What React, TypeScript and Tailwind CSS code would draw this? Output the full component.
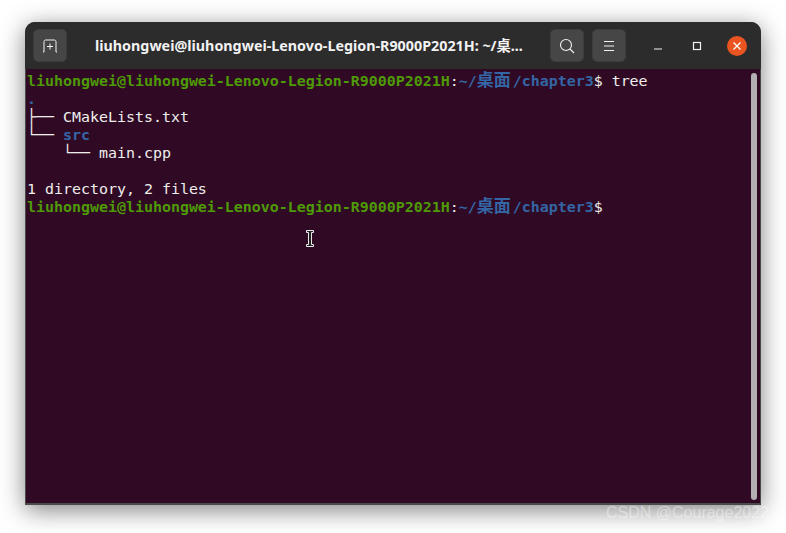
const promptFont = { fontFamily: '"DejaVu Sans Mono", "Noto Sans CJK SC", monospace' };

function Prompt({ children }: { children?: React.ReactNode }) {
  return (
    <div className="flex h-[18px] items-center whitespace-pre">
      <span className="font-bold text-[#4e9a06]">liuhongwei@liuhongwei-Lenovo-Legion-R9000P2021H</span>
      <span className="text-[#eeeeec]">:</span>
      <span className="font-bold text-[#3465a4]">
        ~/
        <span className="inline-block w-[36px] font-['Noto_Sans_CJK_SC',sans-serif] text-[17px] leading-[0]">桌面</span>
        /chapter3
      </span>
      <span className="text-[#eeeeec]">$</span>
      {children}
    </div>
  );
}

function HeaderButton({ children }: { children: React.ReactNode }) {
  return (
    <button className="flex h-[33px] w-[34px] items-center justify-center rounded-[5px] border border-[#3c3c3c] bg-[#464646]">
      {children}
    </button>
  );
}

export default function App() {
  return (
    <div className="relative h-[533px] w-[786px] overflow-hidden bg-white pl-[25px] pt-[22px]">
      <div className="flex h-[483px] w-[736px] flex-col overflow-hidden rounded-t-[10px] border-b-2 border-[#4a4a4a] bg-[#2c2c2c] shadow-[0_5px_24px_rgba(0,0,0,0.5)]">
        <header className="flex h-[47px] shrink-0 items-center bg-[#2c2c2c] pl-[8px] pr-[14px]">
          <HeaderButton>
            <svg width="16" height="14" viewBox="0 0 16 14" fill="none" stroke="#f2f2f2" strokeWidth="1">
              <path d="M1 13H2V2.5C2 1.7 2.7 1 3.5 1H12.5C13.3 1 14 1.7 14 2.5V13H15" />
              <path d="M8 4.5V10.5M5 7.5H11" />
            </svg>
          </HeaderButton>
          <h1 className="ml-[28px] w-[427px] whitespace-nowrap text-center font-['Noto_Sans','Noto_Sans_CJK_SC',sans-serif] text-[14.3px] font-bold text-[#f2f2f2]">
            liuhongwei@liuhongwei-Lenovo-Legion-R9000P2021H: ~/桌...
          </h1>
          <div className="ml-[28px] flex gap-[8px]">
            <HeaderButton>
              <svg width="16" height="16" viewBox="0 0 16 16" fill="none" stroke="#f2f2f2" strokeWidth="1.1">
                <circle cx="7" cy="7" r="5.5" />
                <path d="M11 11L15 15" />
              </svg>
            </HeaderButton>
            <HeaderButton>
              <svg width="12" height="10" viewBox="0 0 12 10" fill="none" stroke="#f2f2f2" strokeWidth="1">
                <path d="M1 .5H11M1 5H11M1 9.5H11" />
              </svg>
            </HeaderButton>
          </div>
          <div className="ml-auto flex items-center">
            <svg width="10" height="10" viewBox="0 0 10 10" fill="none" stroke="#f2f2f2" strokeWidth="1.2">
              <path d="M1 8H9" />
            </svg>
            <svg className="ml-[29px]" width="10" height="10" viewBox="0 0 10 10" fill="none" stroke="#f2f2f2" strokeWidth="1.2">
              <rect x="1.5" y="1.5" width="7" height="7" />
            </svg>
            <span className="ml-[25px] flex h-[20px] w-[20px] items-center justify-center rounded-full bg-[#e95420]">
              <svg width="10" height="10" viewBox="0 0 10 10" fill="none" stroke="#ffffff" strokeWidth="1.3">
                <path d="M1.5 1.5L8.5 8.5M8.5 1.5L1.5 8.5" />
              </svg>
            </span>
          </div>
        </header>

        <main
          style={promptFont}
          className="relative flex-1 border-x border-[#4a4a4a] bg-[#300a24] pl-[1px] pt-[3px] text-[14.95px] leading-[18px] text-[#eeeeec]"
        >
          <Prompt>
            <span> tree</span>
          </Prompt>
          <div className="h-[18px] font-bold text-[#3465a4]">.</div>
          <div className="h-[18px] whitespace-pre">├── CMakeLists.txt</div>
          <div className="h-[18px] whitespace-pre">
            └── <span className="font-bold text-[#3465a4]">src</span>
          </div>
          <div className="h-[18px] whitespace-pre">    └── main.cpp</div>
          <div className="h-[18px]" />
          <div className="h-[18px] whitespace-pre">1 directory, 2 files</div>
          <Prompt />

          {/* overlay scrollbar */}
          <div className="absolute bottom-[3px] right-[3px] top-[4px] w-[6px] rounded-full bg-[#b3aeb1]" />
          {/* i-beam pointer */}
          <svg className="absolute left-[280px] top-[161px]" width="8" height="17" viewBox="0 0 8 17" fill="#222" stroke="#fff" strokeWidth="0.9">
            <path d="M.5.5H7.5V2.5H5.5V14.5H7.5V16.5H.5V14.5H2.5V2.5H.5Z" />
          </svg>
        </main>
      </div>
      <span className="absolute left-[606px] top-[503px] font-['Liberation_Sans',sans-serif] text-[16px] leading-[20px] text-white/40">
        CSDN @Courage2022
      </span>
    </div>
  );
}
